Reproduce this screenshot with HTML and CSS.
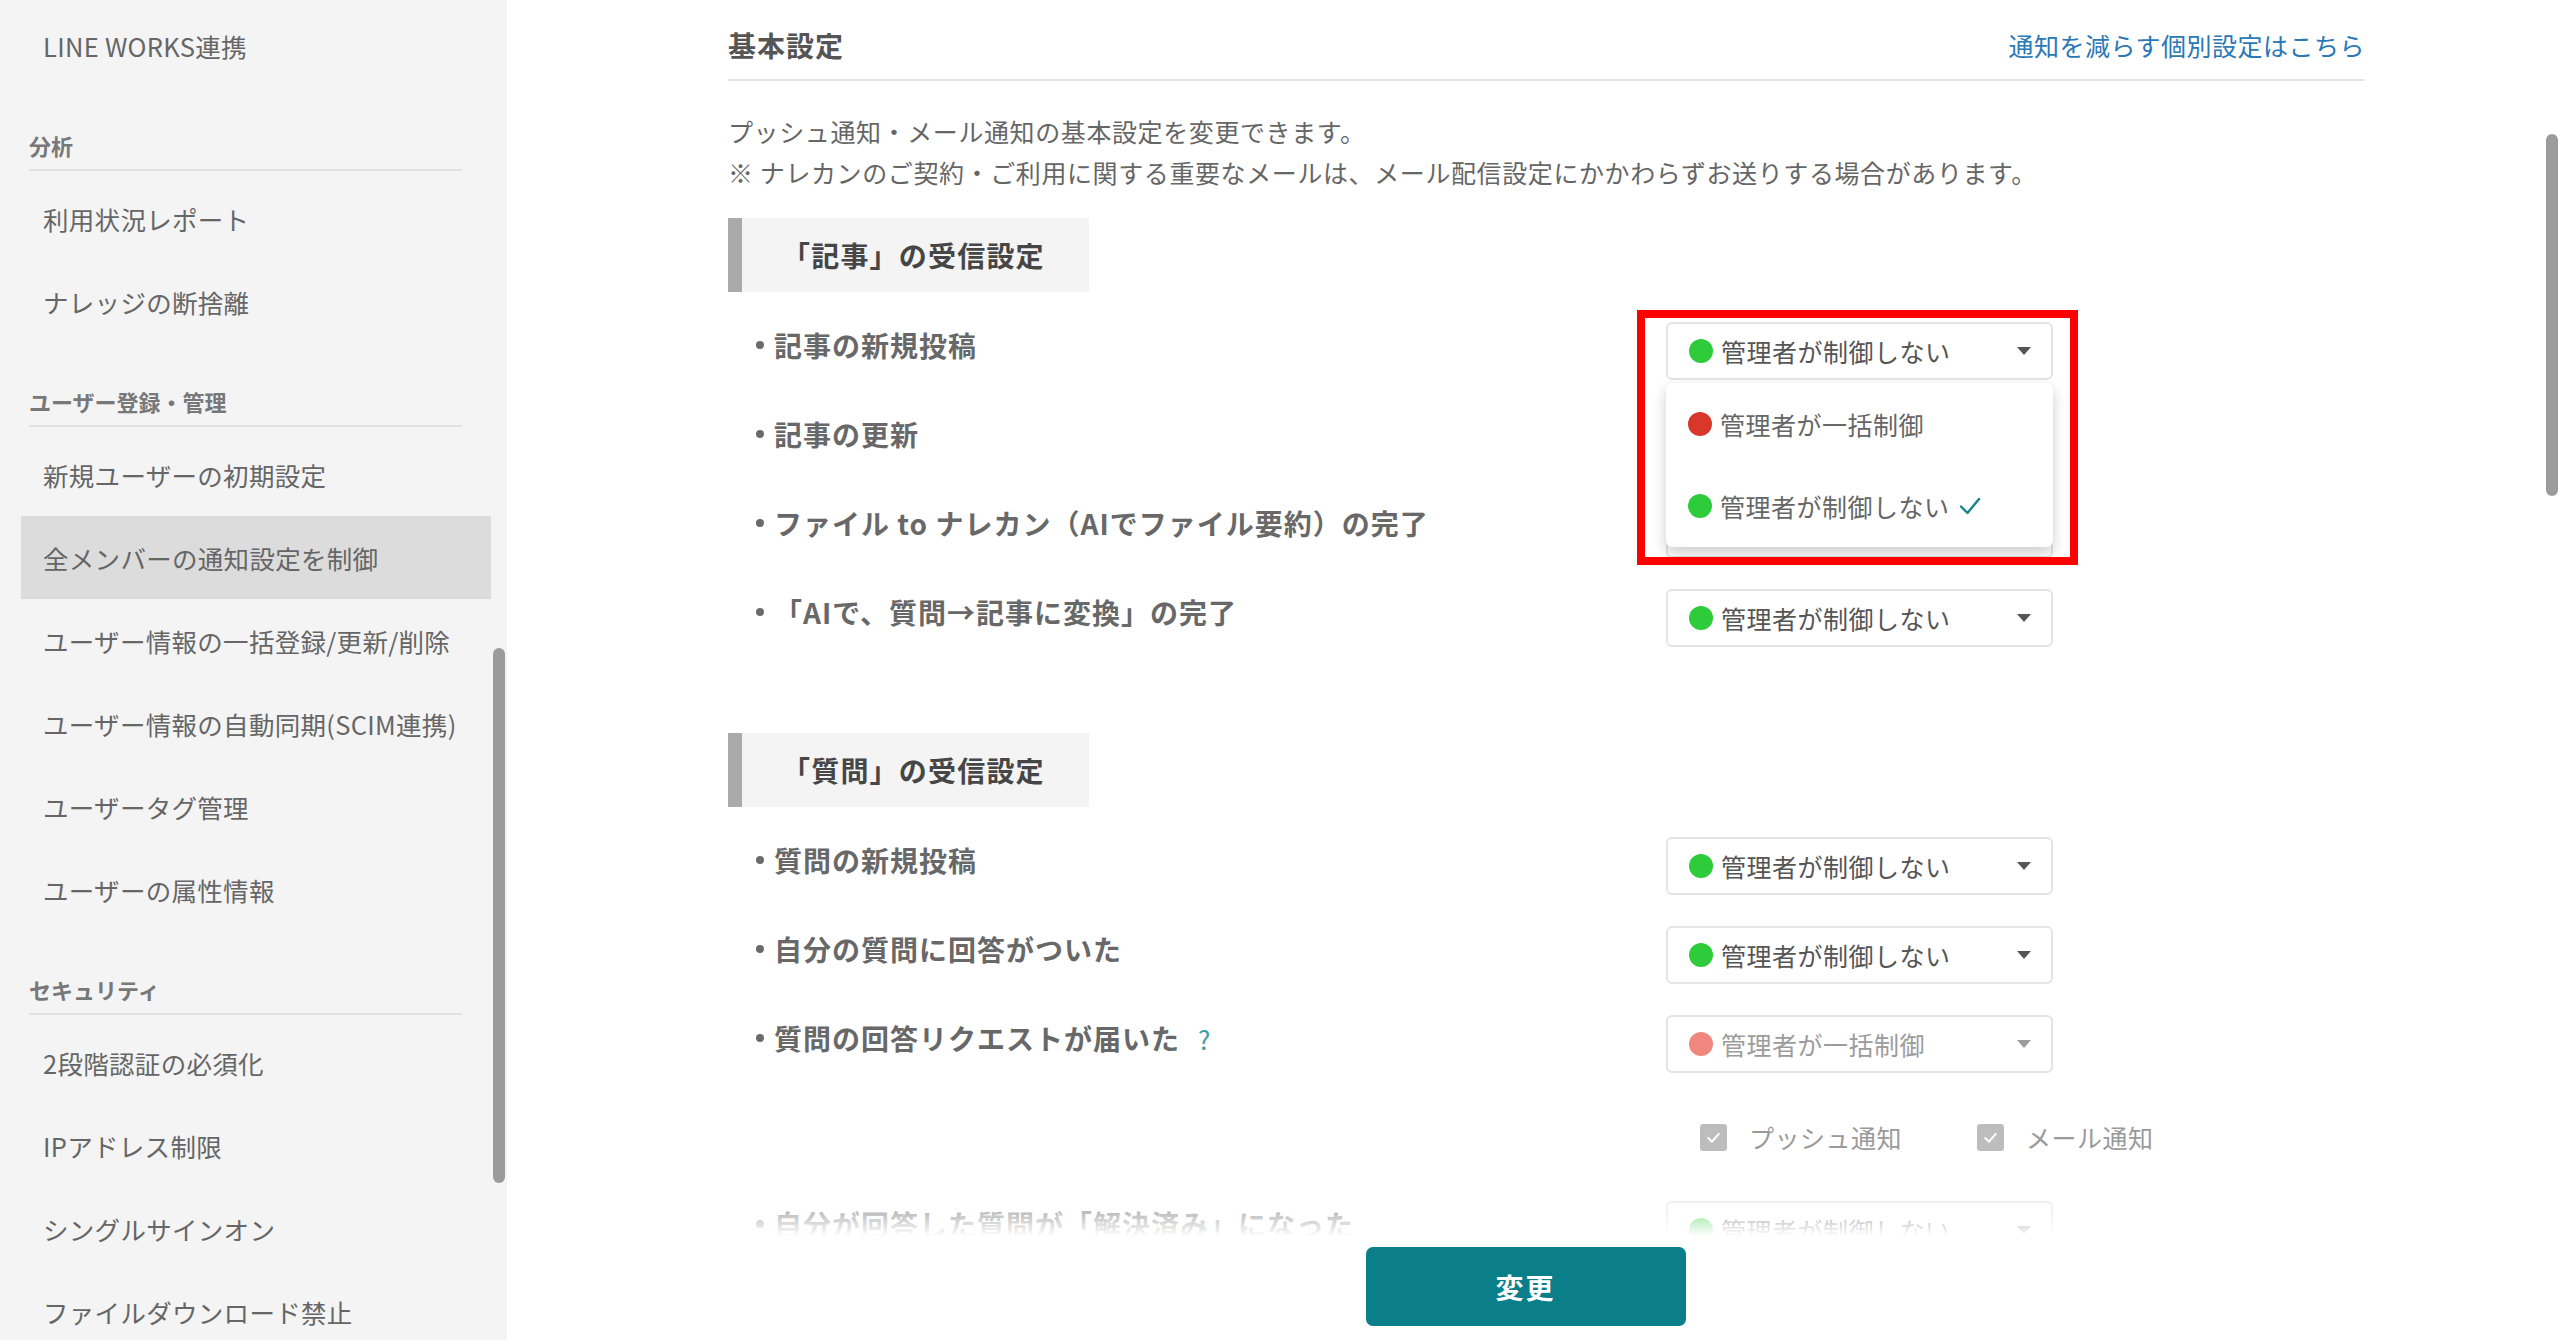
FILE: index.html
```html
<!DOCTYPE html>
<html lang="ja">
<head>
  <meta charset="UTF-8">
  <meta name="viewport" content="width=device-width, initial-scale=1.0">
  <title>全メンバーの通知設定を制御</title>
  <link rel="stylesheet" href="styles.css">
</head>
<body>
  <aside class="sidebar">
    <nav class="side-nav">
      <a class="side-item">LINE WORKS連携</a>

      <div class="side-group">分析</div>
      <a class="side-item">利用状況レポート</a>
      <a class="side-item">ナレッジの断捨離</a>

      <div class="side-group">ユーザー登録・管理</div>
      <a class="side-item">新規ユーザーの初期設定</a>
      <a class="side-item active">全メンバーの通知設定を制御</a>
      <a class="side-item">ユーザー情報の一括登録/更新/削除</a>
      <a class="side-item">ユーザー情報の自動同期(SCIM連携)</a>
      <a class="side-item">ユーザータグ管理</a>
      <a class="side-item">ユーザーの属性情報</a>

      <div class="side-group">セキュリティ</div>
      <a class="side-item">2段階認証の必須化</a>
      <a class="side-item">IPアドレス制限</a>
      <a class="side-item">シングルサインオン</a>
      <a class="side-item">ファイルダウンロード禁止</a>
    </nav>
    <div class="scroll-thumb side-thumb"></div>
  </aside>

  <main class="main">
    <div class="content">
      <div class="page-head">
        <h1 class="page-title">基本設定</h1>
        <a class="head-link">通知を減らす個別設定はこちら</a>
      </div>

      <p class="lead">
        プッシュ通知・メール通知の基本設定を変更できます。<br>
        ※ ナレカンのご契約・ご利用に関する重要なメールは、メール配信設定にかかわらずお送りする場合があります。
      </p>

      <section class="section">
        <h2 class="section-title">「記事」の受信設定</h2>
        <div class="rows">
          <div class="setting-row">
            <div class="setting-label"><span class="bullet"></span>記事の新規投稿</div>
            <div class="select-wrap">
              <div class="select"><span class="dot green"></span>管理者が制御しない<span class="caret"></span></div>
              <ul class="select-menu">
                <li class="menu-item"><span class="dot red"></span>管理者が一括制御</li>
                <li class="menu-item"><span class="dot green"></span>管理者が制御しない
                  <svg class="check" viewBox="0 0 22 20" width="22" height="20"><path d="M2 10.5 L8.5 17 L20 3" fill="none" stroke="#17848e" stroke-width="2.4" stroke-linecap="round" stroke-linejoin="round"/></svg>
                </li>
              </ul>
              <div class="highlight"></div>
            </div>
          </div>
          <div class="setting-row">
            <div class="setting-label"><span class="bullet"></span>記事の更新</div>
            <div class="select-wrap">
              <!-- hidden under the open menu -->
              <div class="select covered"><span class="dot green"></span>管理者が制御しない<span class="caret"></span></div>
            </div>
          </div>
          <div class="setting-row">
            <div class="setting-label"><span class="bullet"></span>ファイル to ナレカン（AIでファイル要約）の完了</div>
            <div class="select-wrap">
              <div class="select covered"><span class="dot green"></span>管理者が制御しない<span class="caret"></span></div>
            </div>
          </div>
          <div class="setting-row">
            <div class="setting-label"><span class="bullet"></span>「AIで、質問→記事に変換」の完了</div>
            <div class="select-wrap">
              <div class="select"><span class="dot green"></span>管理者が制御しない<span class="caret"></span></div>
            </div>
          </div>
        </div>
      </section>

      <section class="section">
        <h2 class="section-title">「質問」の受信設定</h2>
        <div class="rows">
          <div class="setting-row">
            <div class="setting-label"><span class="bullet"></span>質問の新規投稿</div>
            <div class="select-wrap">
              <div class="select"><span class="dot green"></span>管理者が制御しない<span class="caret"></span></div>
            </div>
          </div>
          <div class="setting-row">
            <div class="setting-label"><span class="bullet"></span>自分の質問に回答がついた</div>
            <div class="select-wrap">
              <div class="select"><span class="dot green"></span>管理者が制御しない<span class="caret"></span></div>
            </div>
          </div>
          <div class="setting-row">
            <div class="setting-label"><span class="bullet"></span>質問の回答リクエストが届いた<span class="help">?</span></div>
            <div class="select-wrap">
              <div class="select disabled"><span class="dot red"></span>管理者が一括制御<span class="caret"></span></div>
            </div>
          </div>
          <div class="check-row">
            <label class="check-item"><span class="checkbox"><svg viewBox="0 0 16 16" width="17" height="17"><path d="M3 8.5 L6.5 12 L13 4.5" fill="none" stroke="#fff" stroke-width="1.8" stroke-linecap="round" stroke-linejoin="round"/></svg></span>プッシュ通知</label>
            <label class="check-item"><span class="checkbox"><svg viewBox="0 0 16 16" width="17" height="17"><path d="M3 8.5 L6.5 12 L13 4.5" fill="none" stroke="#fff" stroke-width="1.8" stroke-linecap="round" stroke-linejoin="round"/></svg></span>メール通知</label>
          </div>
          <div class="setting-row">
            <div class="setting-label"><span class="bullet"></span>自分が回答した質問が「解決済み」になった</div>
            <div class="select-wrap">
              <div class="select"><span class="dot green"></span>管理者が制御しない<span class="caret"></span></div>
            </div>
          </div>
          <div class="setting-row">
            <div class="setting-label"><span class="bullet"></span>質問へのコメント</div>
            <div class="select-wrap">
              <div class="select"><span class="dot green"></span>管理者が制御しない<span class="caret"></span></div>
            </div>
          </div>
        </div>
      </section>
    </div>

    <div class="footer">
      <button class="submit">変更</button>
    </div>
    <div class="scroll-thumb main-thumb"></div>
  </main>
</body>
</html>
```

FILE: styles.css
```css
* {
  box-sizing: border-box;
}
body {
  margin: 0;
  height: 1340px;
  display: flex;
  overflow: hidden;
  font-family: "Noto Sans CJK JP", "Noto Sans", sans-serif;
  background: #fff;
  color: #666;
}

/* sidebar */
.sidebar {
  position: relative;
  width: 507px;
  flex-shrink: 0;
  height: 1340px;
  background: #f4f4f4;
  overflow: hidden;
}
.side-nav {
  padding-top: 4px;
}
.side-item {
  display: flex;
  align-items: center;
  height: 83px;
  width: 470px;
  margin-left: 21px;
  padding-left: 22px;
  font-size: 25.5px;
  letter-spacing: 0.3px;
  color: #666;
}
.side-item.active {
  background: #dcdcdc;
}
.side-group {
  width: 433px;
  margin: 43px 0 6px 29px;
  padding-bottom: 9px;
  border-bottom: 2px solid #e2e2e2;
  font-size: 22px;
  line-height: 30px;
  font-weight: 700;
  color: #787878;
}
.scroll-thumb {
  position: absolute;
  width: 12px;
  border-radius: 6px;
  background: #9b9b9b;
}
.side-thumb {
  left: 493px;
  top: 648px;
  height: 535px;
}

/* main */
.main {
  position: relative;
  flex: 1;
  height: 1340px;
  overflow: hidden;
}
.main-thumb {
  right: 2px;
  top: 134px;
  height: 362px;
}
.content {
  width: 1858px;
  padding-left: 221px;
}
.page-head {
  display: flex;
  justify-content: space-between;
  align-items: center;
  height: 81px;
  padding-top: 10px;
  border-bottom: 2px solid #e6e6e6;
}
.page-title {
  margin: 0;
  font-size: 28px;
  font-weight: 700;
  letter-spacing: 1px;
  color: #555;
}
.head-link {
  font-size: 25px;
  letter-spacing: 0.5px;
  color: #2a78b6;
}
.lead {
  margin: 30px 0 0;
  font-size: 25px;
  line-height: 41px;
  letter-spacing: 0.6px;
  color: #666;
}

.section {
  margin-top: 25px;
}
.section + .section {
  margin-top: 86px;
}
.section-title {
  display: inline-flex;
  align-items: center;
  height: 74px;
  margin: 0;
  padding: 0 44px 0 40px;
  background: #f4f4f4;
  border-left: 14px solid #aaa;
  font-size: 28px;
  font-weight: 700;
  letter-spacing: 1.2px;
  color: #464646;
}
.rows {
  display: flex;
  flex-direction: column;
  gap: 31px;
  margin-top: 30px;
}
.setting-row {
  display: grid;
  grid-template-columns: 938px 387px;
  align-items: center;
}
.setting-label {
  display: flex;
  align-items: center;
  padding-bottom: 12px;
  font-size: 28px;
  font-weight: 700;
  letter-spacing: 1px;
  color: #686868;
}
.bullet {
  width: 8px;
  height: 8px;
  margin: 0 10px 0 28px;
  border-radius: 50%;
  background: #6a6a6a;
}
.help {
  margin-left: 18px;
  font-size: 26px;
  font-weight: 400;
  color: #3a9ea8;
}

/* select */
.select-wrap {
  position: relative;
}
.select {
  display: flex;
  align-items: center;
  height: 58px;
  padding: 0 20px 0 21px;
  border: 2px solid #e4e4e4;
  border-radius: 6px;
  background: #fff;
  font-size: 25px;
  letter-spacing: 0.5px;
  color: #555;
}
.select.covered > * {
  visibility: hidden;
}
.select.covered {
  color: transparent;
}
.dot {
  width: 24px;
  height: 24px;
  margin-right: 8px;
  border-radius: 50%;
  flex-shrink: 0;
}
.dot.green {
  background: #2ecc3b;
}
.dot.red {
  background: #d9362c;
}
.caret {
  margin-left: auto;
  border-left: 7.5px solid transparent;
  border-right: 7.5px solid transparent;
  border-top: 8px solid #555;
}
.select.disabled {
  color: #9c9c9c;
}
.select.disabled .dot.red {
  background: #f0877e;
}
.select.disabled .caret {
  border-top-color: #9c9c9c;
}
.select-menu {
  position: absolute;
  z-index: 5;
  top: 61px;
  left: 0;
  width: 387px;
  margin: 0;
  padding: 0;
  list-style: none;
  background: #fff;
  border-radius: 6px;
  box-shadow: 0 6px 14px rgba(0, 0, 0, 0.2);
}
.menu-item {
  display: flex;
  align-items: center;
  height: 82px;
  padding-left: 22px;
  font-size: 25px;
  letter-spacing: 0.5px;
  color: #666;
}
.check {
  margin-left: 9px;
}
.highlight {
  position: absolute;
  z-index: 6;
  left: -29px;
  top: -12px;
  width: 441px;
  height: 255px;
  border: 8px solid #f00;
}

/* checkboxes */
.check-row {
  display: flex;
  align-items: center;
  height: 66px;
  padding-left: 972px;
}
.check-item {
  display: flex;
  align-items: center;
  font-size: 25px;
  letter-spacing: 0.5px;
  color: #9a9a9a;
}
.check-item + .check-item {
  margin-left: 75px;
}
.checkbox {
  display: flex;
  align-items: center;
  justify-content: center;
  width: 27px;
  height: 27px;
  margin-right: 22px;
  border-radius: 3px;
  background: #bdbdbd;
}

/* footer */
.footer {
  position: absolute;
  left: 0;
  right: 16px;
  bottom: 0;
  height: 160px;
  display: flex;
  justify-content: center;
  align-items: flex-end;
  padding-bottom: 14px;
  background: linear-gradient(to bottom, rgba(255, 255, 255, 0) 0, rgba(255, 255, 255, 0.88) 50px, #fff 56px);
}
.submit {
  width: 320px;
  height: 79px;
  border: none;
  border-radius: 7px;
  background: #0a7f89;
  color: #fff;
  font-family: inherit;
  font-size: 28px;
  font-weight: 700;
  letter-spacing: 2px;
}
```
